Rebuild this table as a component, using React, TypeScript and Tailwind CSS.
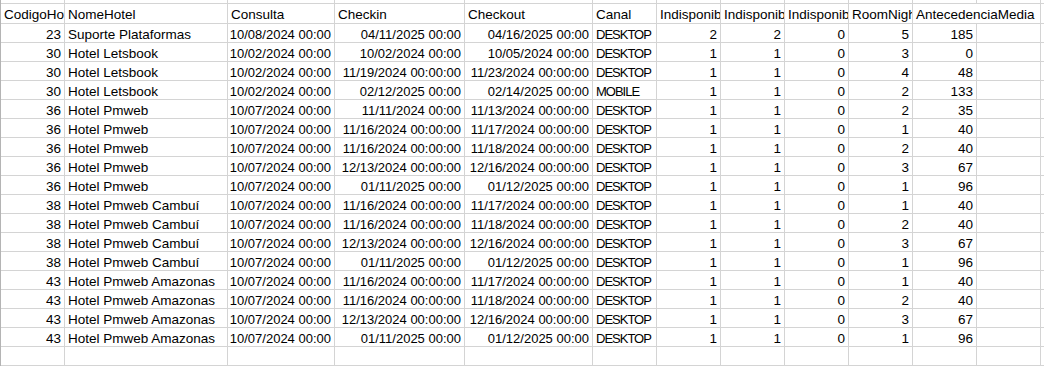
import React from "react";

const widths = [64, 163, 107, 130, 128, 64, 64, 64, 64, 64, 64, 64];
// right aligned columns (numbers and dates)
const right = [true, false, true, true, true, false, true, true, true, true, true, true];
const dateCol = [false, false, true, true, true, false, false, false, false, false, false, false];

const header = [
  "CodigoHotel",
  "NomeHotel",
  "Consulta",
  "Checkin",
  "Checkout",
  "Canal",
  "IndisponibilidadeTotal",
  "IndisponibilidadeParcial",
  "IndisponibilidadeOutros",
  "RoomNights",
  "AntecedenciaMedia",
  "",
];

const rows: string[][] = [
  ["23", "Suporte Plataformas", "10/08/2024 00:00", "04/11/2025 00:00", "04/16/2025 00:00", "DESKTOP", "2", "2", "0", "5", "185"],
  ["30", "Hotel Letsbook", "10/02/2024 00:00", "10/02/2024 00:00", "10/05/2024 00:00", "DESKTOP", "1", "1", "0", "3", "0"],
  ["30", "Hotel Letsbook", "10/02/2024 00:00", "11/19/2024 00:00:00", "11/23/2024 00:00:00", "DESKTOP", "1", "1", "0", "4", "48"],
  ["30", "Hotel Letsbook", "10/02/2024 00:00", "02/12/2025 00:00", "02/14/2025 00:00", "MOBILE", "1", "1", "0", "2", "133"],
  ["36", "Hotel Pmweb", "10/07/2024 00:00", "11/11/2024 00:00", "11/13/2024 00:00:00", "DESKTOP", "1", "1", "0", "2", "35"],
  ["36", "Hotel Pmweb", "10/07/2024 00:00", "11/16/2024 00:00:00", "11/17/2024 00:00:00", "DESKTOP", "1", "1", "0", "1", "40"],
  ["36", "Hotel Pmweb", "10/07/2024 00:00", "11/16/2024 00:00:00", "11/18/2024 00:00:00", "DESKTOP", "1", "1", "0", "2", "40"],
  ["36", "Hotel Pmweb", "10/07/2024 00:00", "12/13/2024 00:00:00", "12/16/2024 00:00:00", "DESKTOP", "1", "1", "0", "3", "67"],
  ["36", "Hotel Pmweb", "10/07/2024 00:00", "01/11/2025 00:00", "01/12/2025 00:00", "DESKTOP", "1", "1", "0", "1", "96"],
  ["38", "Hotel Pmweb Cambuí", "10/07/2024 00:00", "11/16/2024 00:00:00", "11/17/2024 00:00:00", "DESKTOP", "1", "1", "0", "1", "40"],
  ["38", "Hotel Pmweb Cambuí", "10/07/2024 00:00", "11/16/2024 00:00:00", "11/18/2024 00:00:00", "DESKTOP", "1", "1", "0", "2", "40"],
  ["38", "Hotel Pmweb Cambuí", "10/07/2024 00:00", "12/13/2024 00:00:00", "12/16/2024 00:00:00", "DESKTOP", "1", "1", "0", "3", "67"],
  ["38", "Hotel Pmweb Cambuí", "10/07/2024 00:00", "01/11/2025 00:00", "01/12/2025 00:00", "DESKTOP", "1", "1", "0", "1", "96"],
  ["43", "Hotel Pmweb Amazonas", "10/07/2024 00:00", "11/16/2024 00:00:00", "11/17/2024 00:00:00", "DESKTOP", "1", "1", "0", "1", "40"],
  ["43", "Hotel Pmweb Amazonas", "10/07/2024 00:00", "11/16/2024 00:00:00", "11/18/2024 00:00:00", "DESKTOP", "1", "1", "0", "2", "40"],
  ["43", "Hotel Pmweb Amazonas", "10/07/2024 00:00", "12/13/2024 00:00:00", "12/16/2024 00:00:00", "DESKTOP", "1", "1", "0", "3", "67"],
  ["43", "Hotel Pmweb Amazonas", "10/07/2024 00:00", "01/11/2025 00:00", "01/12/2025 00:00", "DESKTOP", "1", "1", "0", "1", "96"],
];

const Cell = ({ w, children, alignRight, spill, noBorder, extra = "" }: any) => (
  <div
    className={`shrink-0 h-full flex items-center pt-[4px] px-[3px] whitespace-nowrap ${
      noBorder ? "" : "border-r border-[#d4d4d4]"
    } ${spill ? "overflow-visible relative z-10" : "overflow-hidden"} ${
      alignRight ? "justify-end" : "justify-start"
    } ${extra}`}
    style={{ width: w }}
  >
    {children}
  </div>
);

const EmptyRow = ({ h }: { h: string }) => (
  <div className={`flex border-b border-[#d4d4d4] ${h}`}>
    {widths.map((w, i) => (
      <Cell key={i} w={w} />
    ))}
    <div className="flex-1" />
  </div>
);

export default function App() {
  return (
    <div
      className="w-[1044px] h-[369px] overflow-hidden bg-white text-black text-[13.5px]"
      style={{ fontFamily: '"Liberation Sans", Arial, sans-serif' }}
    >
      <div className="border-l border-[#b4b4b4]">
        <EmptyRow h="h-[4px]" />
        <div className="flex h-[20px] border-b border-[#d4d4d4]">
          {header.map((t, i) => (
            <Cell key={i} w={widths[i]} spill={i === 10} noBorder={i === 10}>
              {t}
            </Cell>
          ))}
          <div className="flex-1" />
        </div>
        {rows.map((r, ri) => (
          <div key={ri} className="flex h-[19px] border-b border-[#d4d4d4]">
            {widths.map((w, i) => (
              <Cell
                key={i}
                w={w}
                alignRight={right[i]}
                extra={
                  dateCol[i]
                    ? "text-[13px]"
                    : i === 5
                      ? "text-[13px] tracking-[-1px]"
                      : ""
                }
              >
                {r[i] ?? ""}
              </Cell>
            ))}
            <div className="flex-1" />
          </div>
        ))}
        <EmptyRow h="h-[19px]" />
      </div>
    </div>
  );
}
